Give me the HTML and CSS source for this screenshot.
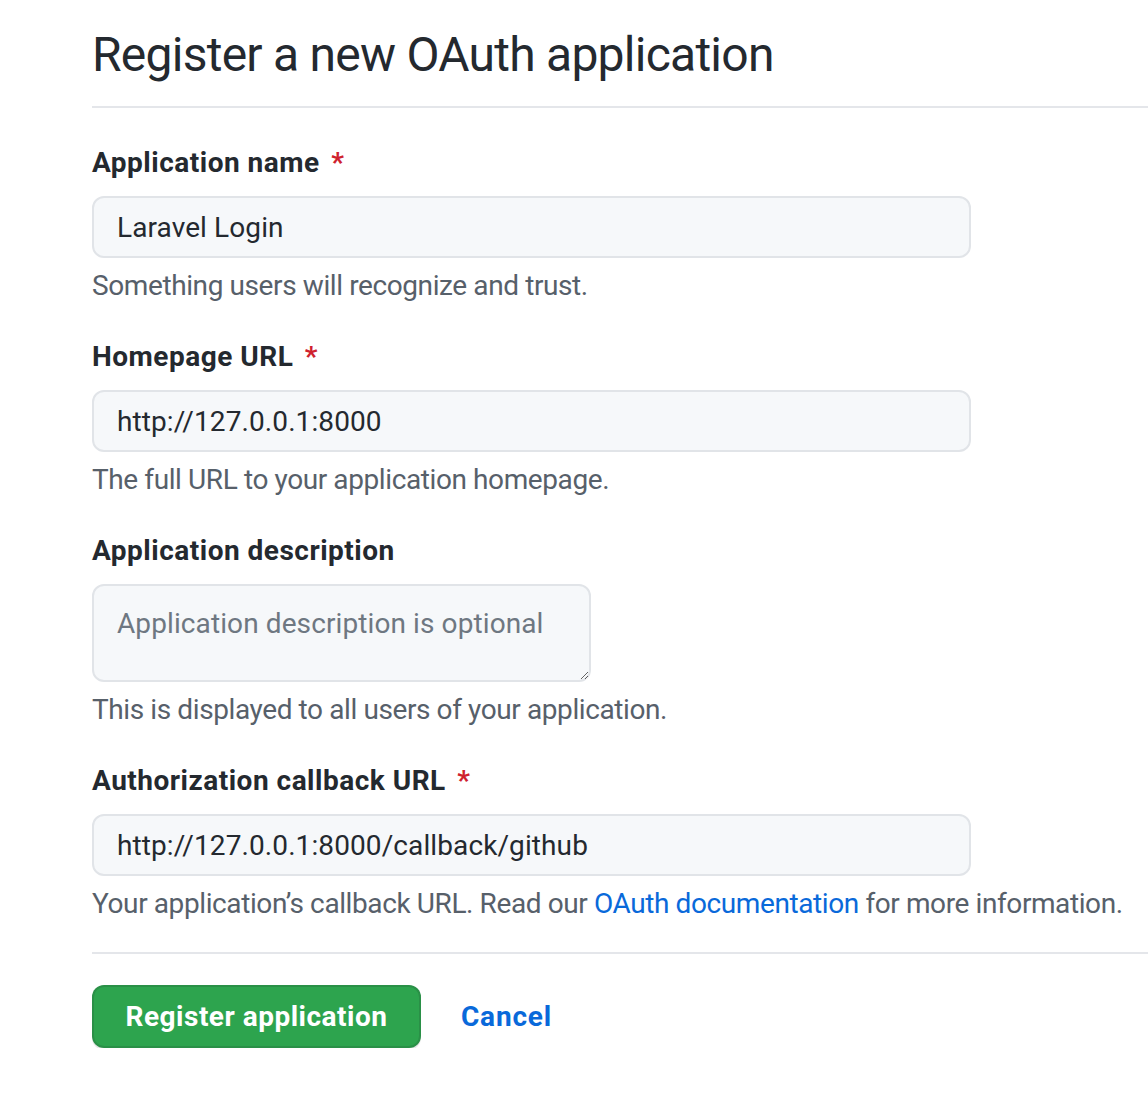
FILE: index.html
```html
<!DOCTYPE html>
<html>
<head>
<meta charset="utf-8">
<link rel="stylesheet" href="styles.css">
</head>
<body>
<main class="page">
  <div class="subhead">
    <h2 class="subhead-heading">Register a new OAuth application</h2>
  </div>
  <form class="form">
    <div class="form-group">
      <label class="label">Application name <span class="req">*</span></label>
      <input class="input" type="text" value="Laravel Login">
      <p class="note">Something users will recognize and trust.</p>
    </div>
    <div class="form-group">
      <label class="label">Homepage URL <span class="req">*</span></label>
      <input class="input" type="text" value="http://127.0.0.1:8000">
      <p class="note">The full URL to your application homepage.</p>
    </div>
    <div class="form-group">
      <label class="label">Application description</label>
      <textarea class="textarea" placeholder="Application description is optional"></textarea>
      <p class="note">This is displayed to all users of your application.</p>
    </div>
    <div class="form-group last">
      <label class="label">Authorization callback URL <span class="req">*</span></label>
      <input class="input" type="text" value="http://127.0.0.1:8000/callback/github">
      <p class="note">Your application’s callback URL. Read our <a class="link" href="#">OAuth documentation</a> for more information.</p>
    </div>
    <div class="actions">
      <button type="button" class="btn-primary">Register application</button>
      <a class="cancel" href="#">Cancel</a>
    </div>
  </form>
</main>
</body>
</html>
```
FILE: styles.css
```css
* { box-sizing: border-box; }
html, body { margin: 0; padding: 0; background: #fff; }
body {
  font-family: Roboto, "Noto Sans", "Liberation Sans", sans-serif;
  color: #24292f;
  overflow: hidden;
}
.page {
  padding-left: 92px;
  padding-top: 24px;
}
.subhead {
  border-bottom: 2px solid #e4e6ea;
  padding-bottom: 20px;
  margin-right: -20px;
}
.subhead-heading {
  margin: 0;
  font-size: 48px;
  font-weight: 400;
  line-height: 62px;
  letter-spacing: -0.75px;
}
.form { margin-top: 35px; }
.form-group { margin-bottom: 31px; }
.form-group.last { margin-bottom: 28px; }
.label {
  display: block;
  font-size: 28px;
  font-weight: 700;
  line-height: 40px;
  margin-bottom: 13px;
  letter-spacing: 0.5px;
}
.req { color: #cf222e; margin-left: 4px; }
.input, .textarea {
  display: block;
  width: 879px;
  height: 62px;
  font-family: inherit;
  font-size: 28px;
  letter-spacing: 0.1px;
  color: #24292f;
  background: #f6f8fa;
  border: 2px solid #e1e4e8;
  border-radius: 12px;
  padding: 0 23px;
  outline: none;
}
.textarea {
  width: 499px;
  height: 98px;
  padding: 18px 23px;
  line-height: 40px;
  resize: vertical;
  white-space: nowrap;
  overflow: hidden;
}
.textarea::placeholder { color: #6e7781; }
.note {
  margin: 8px 0 0;
  font-size: 28px;
  line-height: 40px;
  color: #57606a;
  white-space: nowrap;
  letter-spacing: -0.4px;
}
.link { color: #0969da; text-decoration: none; }
.actions {
  border-top: 2px solid #e4e6ea;
  margin-right: -20px;
  padding-top: 31px;
  display: flex;
  align-items: center;
  gap: 40px;
}
.btn-primary {
  width: 329px;
  height: 63px;
  background: #2da44e;
  color: #fff;
  border: 2px solid rgba(27, 31, 36, 0.15);
  border-radius: 12px;
  font-family: inherit;
  font-size: 28px;
  font-weight: 700;
  letter-spacing: 0.5px;
  box-shadow: 0 2px 0 rgba(27, 31, 36, 0.1);
}
.cancel {
  color: #0969da;
  font-size: 28px;
  font-weight: 700;
  letter-spacing: 0.8px;
  text-decoration: none;
}
```
